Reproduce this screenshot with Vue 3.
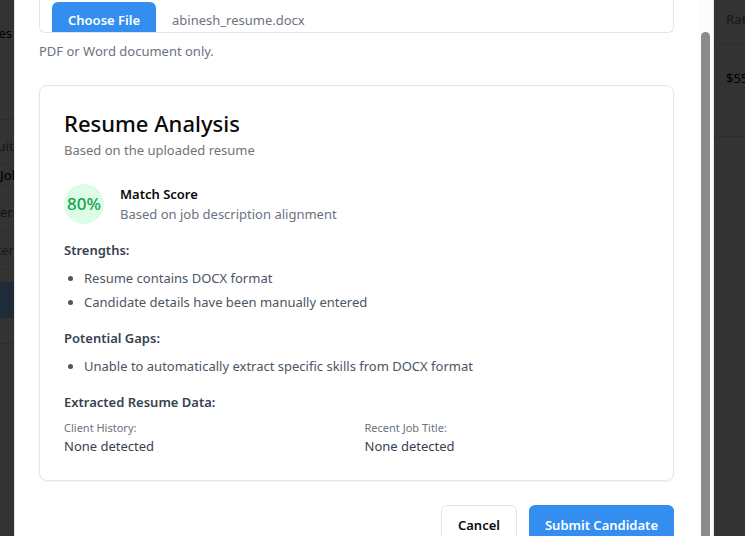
<script setup>
import { ref } from 'vue'

const fileName = ref('abinesh_resume.docx')
const score = ref(80)
const strengths = ['Resume contains DOCX format', 'Candidate details have been manually entered']
const gaps = ['Unable to automatically extract specific skills from DOCX format']
const extracted = [
  { label: 'Client History:', value: 'None detected' },
  { label: 'Recent Job Title:', value: 'None detected' },
]

function pickFile(event) {
  const file = event.target.files[0]
  if (file) fileName.value = file.name
}
</script>

<template>
  <div class="screen">
    <div class="behind left">
      <div class="cell first">es</div>
      <div class="cell heading">uit</div>
      <div class="cell job">Job</div>
      <div class="cell pers">ers</div>
      <div class="cell term">ter</div>
      <div class="bar"></div>
      <div class="cell rest"></div>
    </div>

    <main class="modal">
      <form class="content" @submit.prevent>
        <label class="file">
          <span class="choose">Choose File</span>
          <span class="name">{{ fileName }}</span>
          <input type="file" accept=".pdf,.doc,.docx" @change="pickFile" />
        </label>
        <p class="hint">PDF or Word document only.</p>

        <section class="card">
          <h2>Resume Analysis</h2>
          <p class="sub">Based on the uploaded resume</p>

          <div class="match">
            <div class="score">{{ score }}%</div>
            <div>
              <h3>Match Score</h3>
              <p>Based on job description alignment</p>
            </div>
          </div>

          <div class="group">
            <h4>Strengths:</h4>
            <ul>
              <li v-for="item in strengths" :key="item">{{ item }}</li>
            </ul>
          </div>
          <div class="group">
            <h4>Potential Gaps:</h4>
            <ul>
              <li v-for="item in gaps" :key="item">{{ item }}</li>
            </ul>
          </div>
          <div class="group">
            <h4>Extracted Resume Data:</h4>
            <dl>
              <div v-for="item in extracted" :key="item.label">
                <dt>{{ item.label }}</dt>
                <dd>{{ item.value }}</dd>
              </div>
            </dl>
          </div>
        </section>

        <div class="actions">
          <button type="button" class="cancel">Cancel</button>
          <button type="submit" class="submit">Submit Candidate</button>
        </div>
      </form>
      <div class="track"><div class="thumb"></div></div>
    </main>

    <div class="behind right">
      <div class="cell rate">Rate</div>
      <div class="cell amount">$55</div>
    </div>
  </div>
</template>

<style>
body {
  background: #333;
}
</style>

<style scoped>
* {
  box-sizing: border-box;
  margin: 0;
  padding: 0;
}

.screen {
  display: grid;
  grid-template-columns: 14px minmax(0, 1fr) 31px;
  height: 100vh;
  overflow: hidden;
  background: #333;
  color: #374151;
  font-family: "Segoe UI", "Noto Sans", "Open Sans", sans-serif;
  font-size: 13px;
  line-height: 20px;
}

.behind {
  overflow: hidden;
  white-space: nowrap;
}

.cell {
  display: flex;
  align-items: center;
  border-bottom: 1px solid #2d2d2d;
  color: #111;
}

.left .first {
  justify-content: flex-end;
  height: 120px;
  padding: 0 2px 53px 0;
  color: #000;
}

.left .heading {
  justify-content: flex-end;
  height: 45px;
  padding-top: 8px;
  color: #1a1a1a;
  font-weight: 500;
}

.job {
  height: 21px;
  color: #000;
  font-weight: 500;
}

.pers {
  height: 45px;
  padding-top: 8px;
}

.left .term {
  justify-content: flex-end;
  height: 39px;
  color: #1a1a1a;
}

.bar {
  height: 36px;
  margin-top: 12px;
  background: #1f2b38;
}

.rest {
  height: 26px;
}

.modal {
  display: grid;
  grid-template-columns: minmax(0, 1fr) 15px;
  min-height: 0;
  overflow: hidden;
  border: solid #e5e5e5;
  border-width: 0 1px;
  background: #fff;
}

.content {
  padding: 0 24px;
}

.file {
  position: relative;
  display: flex;
  align-items: flex-start;
  height: 33px;
  padding: 2px 12px 0;
  overflow: hidden;
  border: 1px solid #e5e5e5;
  border-top: 0;
  border-radius: 0 0 6px 6px;
  color: #6b7280;
}

.file input {
  position: absolute;
  inset: 0;
  opacity: 0;
}

.choose {
  margin-right: 16px;
  padding: 8px 16px 12px;
  border-radius: 6px 6px 0 0;
  background: #338eef;
  color: #fff;
  font-weight: 600;
}

.name {
  padding-top: 8px;
}

.hint {
  padding-top: 8px;
  color: #6b7280;
}

.card {
  margin-top: 24px;
  padding: 24px;
  border: 1px solid #e5e5e5;
  border-radius: 8px;
  box-shadow: 0 1px 2px rgba(0, 0, 0, 0.05);
}

h2 {
  color: #0a0a0a;
  font-size: 22px;
  font-weight: 500;
  line-height: 26px;
}

.sub {
  margin-top: 4px;
  color: #737373;
}

.match {
  display: flex;
  align-items: center;
  gap: 16px;
  margin-top: 24px;
}

.score {
  display: grid;
  place-items: center;
  width: 40px;
  height: 40px;
  border-radius: 50%;
  background: #dcfce7;
  color: #16a34a;
  font-size: 17px;
  font-weight: 500;
}

h3 {
  color: #0a0a0a;
  font-size: 13px;
  font-weight: 600;
}

.match p {
  color: #6b7280;
}

.group {
  margin-top: 16px;
}

h4 {
  font-size: 13px;
  font-weight: 600;
}

ul {
  display: grid;
  gap: 4px;
  margin-top: 8px;
  padding-left: 20px;
  color: #4b5563;
}

dl {
  display: grid;
  grid-template-columns: 1fr 1fr;
  gap: 16px;
  margin-top: 8px;
}

dt {
  color: #6b7280;
  font-size: 11px;
  line-height: 16px;
}

.actions {
  display: flex;
  justify-content: flex-end;
  gap: 12px;
  margin-top: 24px;
}

button {
  height: 40px;
  padding: 0 16px;
  border: 0;
  border-radius: 6px;
  font: inherit;
  font-weight: 600;
}

.cancel {
  border: 1px solid #e5e5e5;
  background: #fff;
  color: #0a0a0a;
}

.submit {
  background: #338eef;
  color: #fff;
}

.track {
  padding: 32px 3px 0;
  background: #fcfcfc;
}

.thumb {
  height: 100%;
  border-radius: 5px 5px 0 0;
  background: #8b8b8b;
}

.right .cell {
  padding-left: 12px;
}

.rate {
  height: 44px;
  padding-bottom: 5px;
  color: #1a1a1a;
  font-weight: 500;
}

.amount {
  height: 93px;
  padding-bottom: 24px;
  color: #000;
}
</style>
